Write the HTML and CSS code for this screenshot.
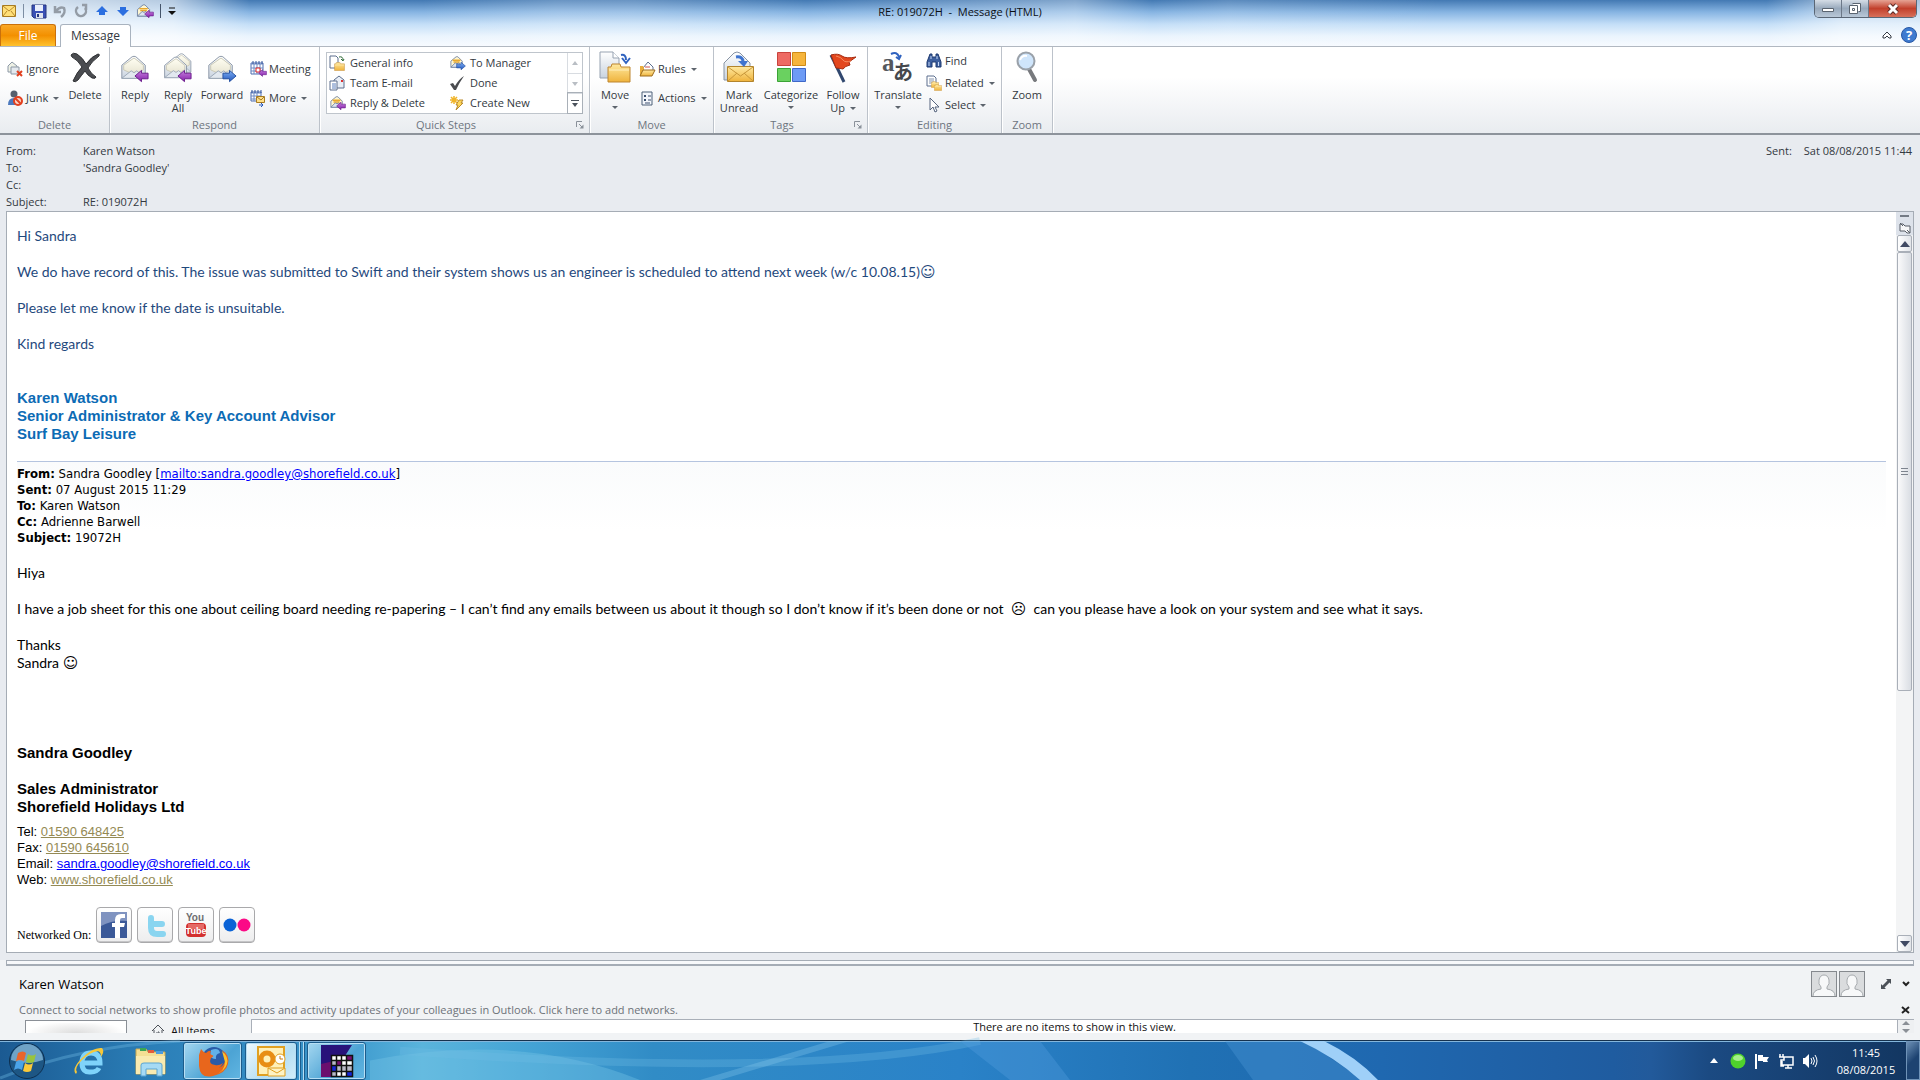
FILE: index.html
```html
<!DOCTYPE html>
<html lang="en">
<head>
<meta charset="utf-8">
<title>RE: 019072H - Message (HTML)</title>
<link rel="stylesheet" href="styles.css">
</head>
<body>
<svg class="defs" aria-hidden="true">
  <defs>
    <linearGradient id="paper" x1="0" y1="0" x2="0" y2="1"><stop offset="0" stop-color="#fffef2"/><stop offset="1" stop-color="#e6e3d0"/></linearGradient>
    <linearGradient id="gold" x1="0" y1="0" x2="0" y2="1"><stop offset="0" stop-color="#ffe9a0"/><stop offset="1" stop-color="#efb33c"/></linearGradient>
    <linearGradient id="ice" x1="0" y1="0" x2="0" y2="1"><stop offset="0" stop-color="#ffffff"/><stop offset="1" stop-color="#c9d3df"/></linearGradient>
    <linearGradient id="blue" x1="0" y1="0" x2="0" y2="1"><stop offset="0" stop-color="#7fb0f5"/><stop offset="1" stop-color="#2458bd"/></linearGradient>
    <linearGradient id="purple" x1="0" y1="0" x2="0" y2="1"><stop offset="0" stop-color="#c77fe0"/><stop offset="1" stop-color="#8420a8"/></linearGradient>
    <symbol id="envelope" viewBox="0 0 32 32">
      <path d="M3 13 14 4q2-1 4 0l10 9v14H3z" fill="url(#ice)" stroke="#8793a3"/>
      <path d="M5 13 15 6q1-1 2 0l9 7v5l-10 5-11-5z" fill="url(#paper)" stroke="#c9c7b4"/>
      <path d="M3 27 13 19l3 2 3-2 9 8z" fill="#e2e8ef" stroke="#9aa6b5"/>
    </symbol>
    <symbol id="left" viewBox="0 0 16 14"><path d="M1 7 8 1v3h7v6H8v3z" fill="url(#purple)" stroke="#6b1d8c"/></symbol>
    <symbol id="right" viewBox="0 0 16 14"><path d="M15 7 8 1v3H1v6h7v3z" fill="url(#blue)" stroke="#2450a0"/></symbol>
    <symbol id="goldmail" viewBox="0 0 16 16">
      <path d="M1 7 7 2h2l5 5v7H1z" fill="#fff6d0" stroke="#7385a3"/>
      <path d="M3 6h9M4 8h7" stroke="#e9a92e" stroke-width="1.5"/>
      <path d="M1 14 6 9l2 1 2-1 4 5z" fill="#dce6f2" stroke="#7385a3"/>
    </symbol>
    <symbol id="folder" viewBox="0 0 24 20"><path d="M1 4h3l1-3h8l1 3h9v15H1z" fill="url(#gold)" stroke="#bd8530"/><path d="M2 7h20" stroke="#fff0bd"/></symbol>
    <symbol id="person" viewBox="0 0 26 26">
      <rect x=".5" y=".5" width="25" height="25" fill="#dadcde" stroke="#85898e"/>
      <path d="M2 25q0-6 8-7v-2q-3-3-2-7 1-5 5-5t5 5q1 4-2 7v2q8 1 8 7" fill="#f7f8f9" stroke="#a6aaae"/>
    </symbol>
    <symbol id="launcher" viewBox="0 0 8 8"><path d="M.5 6V.5H6M3 3l3 3" fill="none" stroke="#8a919a"/><path d="M7.500 3.500v4h-4z" fill="#8a919a"/></symbol>
  </defs>
</svg>
<div class="screen">
  <header class="titlebar">
    <div class="quick">
      <svg width="14" height="12" viewBox="0 0 14 12"><path d="M.5.500h13v11H.5z" fill="#ffdf78" stroke="#a77b22"/><path d="m1 1 6 5 6-5M1 11l4-5M13 11 9 6" fill="none" stroke="#b98a2e"/></svg>
      <i class="sep"></i>
      <button aria-label="Save"><svg width="16" height="16" viewBox="0 0 16 16"><path d="M1 2h14v13H3l-2-2z" fill="#3a50b5" stroke="#28377f"/><path d="M4 2h8v6H4z" fill="#e9eefb"/><path d="M5 10h7v5H5z" fill="#dfe3ee"/><path d="M6 11h2v3H6z" fill="#28377f"/></svg></button>
      <button aria-label="Undo"><svg width="16" height="16" viewBox="0 0 16 16"><path d="M3 3v6h6M4 8q4-5 8-3 2 5-3 9" fill="none" stroke="#949ca6" stroke-width="2.500"/></svg></button>
      <button aria-label="Redo"><svg width="16" height="16" viewBox="0 0 16 16"><path d="M9 2h4v5M12 5a5 5 0 1 1-7-1" fill="none" stroke="#949ca6" stroke-width="2.500"/></svg></button>
      <button aria-label="Previous item"><svg width="16" height="16" viewBox="0 0 16 16"><path d="m8 3 6 6h-3v3H5V9H2z" fill="#2c6fe0"/></svg></button>
      <button aria-label="Next item"><svg width="16" height="16" viewBox="0 0 16 16"><path d="m8 13 6-6h-3V4H5v3H2z" fill="#2c6fe0"/></svg></button>
      <button aria-label="Reply and delete"><svg width="18" height="16" viewBox="0 0 18 16"><use href="#goldmail" width="16" height="15"/><use href="#left" x="8" y="6" width="10" height="10"/></svg></button>
      <i class="sep dark"></i>
      <button class="tiny" aria-label="Customize toolbar"><svg width="8" height="8" viewBox="0 0 8 8"><path d="M1 1h6" stroke="#111"/><path d="M0 4h8L4 8z" fill="#111"/></svg></button>
    </div>
    <h1>RE: 019072H&nbsp; -&nbsp; Message (HTML)</h1>
    <div class="window">
      <button aria-label="Minimize"><svg width="14" height="14" viewBox="0 0 14 14"><path d="M1.500 6.500h11v3h-11z" fill="#fff" stroke="#5a6470"/></svg></button>
      <button aria-label="Restore"><svg width="14" height="14" viewBox="0 0 14 14"><path d="M4.500 1.500h8v8h-2M1.500 3.500h8v8h-8zM4.500 6.500h2v2h-2z" fill="#fff" stroke="#5a6470"/></svg></button>
      <button class="close" aria-label="Close"><svg width="14" height="12" viewBox="0 0 14 12"><path d="M3 2l8 8M11 2l-8 8" stroke="#5c2a26" stroke-width="5"/><path d="M3 2l8 8M11 2l-8 8" stroke="#fff" stroke-width="3"/></svg></button>
    </div>
  </header>
  <nav class="tabs">
    <button class="file">File</button>
    <button class="active">Message</button>
    <div class="help">
      <button aria-label="Collapse ribbon"><svg width="10" height="8" viewBox="0 0 10 8"><path d="M1 5 5 1l4 4v2H7L5 5 3 7H1z" fill="#fff" stroke="#343a44"/></svg></button>
      <button aria-label="Help"><svg width="16" height="16" viewBox="0 0 16 16"><circle cx="8" cy="8" r="7.500" fill="#3f7bd0" stroke="#2858a5"/><text x="8" y="13" text-anchor="middle" class="q">?</text></svg></button>
    </div>
  </nav>

  <section class="ribbon">
    <div class="group g-delete">
      <div class="tools">
        <div class="stack">
          <button><svg width="16" height="16" viewBox="0 0 16 16"><path d="M1 5 5 1l5 4v6H1z" fill="#eef1e6" stroke="#8c98a6"/><path d="M4 6h8v7H4z" fill="#e4e9ef" stroke="#8c98a6"/><path d="m10 10 5 5m0-5-5 5" stroke="#e2401f" stroke-width="2"/></svg>Ignore</button>
          <button><svg width="16" height="16" viewBox="0 0 16 16"><circle cx="7" cy="4" r="3.500" fill="#55606e"/><path d="M1 15q0-7 6-7t5 7z" fill="#4c79bd"/><circle cx="11" cy="11" r="4" fill="#fbd7c9" stroke="#e2401f" stroke-width="2"/><path d="m8 8 6 6" stroke="#e2401f" stroke-width="2"/></svg>Junk <i class="caret"></i></button>
        </div>
        <button class="big"><svg width="32" height="32" viewBox="0 0 32 32"><path d="M2 4q2-3 6-1 6 4 9 10Q23 5 29 3q2 0 1 2-8 6-11 12 3 6 8 9 0 2-4 1-5-3-7-7-4 5-7 9-3 3-5 1 4-9 9-14Q9 9 3 6z" fill="#4a4c50" stroke="#2e3033"/></svg>Delete</button>
      </div>
      <h2>Delete</h2>
    </div>
    <div class="group g-respond">
      <div class="tools">
        <button class="big"><svg width="32" height="32" viewBox="0 0 32 32"><use href="#envelope" x="0" y="2" width="30" height="30"/><use href="#left" x="15" y="18" width="15" height="14"/></svg>Reply</button>
        <button class="big"><svg width="32" height="32" viewBox="0 0 32 32"><use href="#envelope" x="7" y="0" width="25" height="25"/><use href="#envelope" x="0" y="3" width="28" height="28"/><use href="#left" x="15" y="18" width="15" height="14"/></svg>Reply<br>All</button>
        <button class="big wide"><svg width="32" height="32" viewBox="0 0 32 32"><use href="#envelope" x="0" y="2" width="30" height="30"/><use href="#right" x="16" y="18" width="15" height="14"/></svg>Forward</button>
        <div class="stack">
          <button><svg width="16" height="16" viewBox="0 0 16 16"><path d="M1 2h12v11H1z" fill="#fff" stroke="#4c6db0"/><path d="M1 3h12M1 7h12M1 10h12M4 3v10M7 3v10M10 3v10" stroke="#6f8bc4"/><path d="M3 0v3M6 0v3M9 0v3M12 0v3" stroke="#31539a"/><path d="M6 7h4v4H6z" fill="#fff" stroke="#d22"/><use href="#left" x="8" y="8" width="9" height="8"/></svg>Meeting</button>
          <button><svg width="16" height="16" viewBox="0 0 16 16"><path d="M1 2h10v9H1z" fill="#fff" stroke="#4c6db0"/><path d="M1 3h10M1 6h10M1 9h10M4 3v8M7 3v8" stroke="#6f8bc4"/><path d="M2 0v3M5 0v3M8 0v3M11 0v3" stroke="#31539a"/><path d="M6.500 6.500h8v6h-8z" fill="#ffe08a" stroke="#a77b22"/><path d="m7 7 4 3 3-3" fill="none" stroke="#a77b22"/><path d="M9 15h4m-2-2 2 2-2 2" stroke="#2458bd" fill="none"/></svg>More <i class="caret"></i></button>
        </div>
      </div>
      <h2>Respond</h2>
    </div>
    <div class="group g-steps">
      <div class="gallery">
        <div class="steps">
          <button><svg width="16" height="16" viewBox="0 0 16 16"><path d="M1 1h6l2 2v10H1z" fill="#fff" stroke="#5c6f8e"/><path d="M10 2q4-1 4 3m-2-1 2 2 1-2" fill="none" stroke="#2d6a35"/><use href="#folder" x="5" y="7" width="11" height="9"/></svg>General info</button>
          <button><svg width="16" height="16" viewBox="0 0 16 16"><use href="#goldmail" width="16" height="14"/><use href="#right" x="7" y="6" width="10" height="10"/></svg>To Manager</button>
          <button><svg width="16" height="16" viewBox="0 0 16 16"><path d="M5 5 10 1l5 4v8H5z" fill="#e9eef6" stroke="#5c6f8e"/><path d="M1 6h7v9H1z" fill="#fff" stroke="#5c6f8e"/><path d="M3 9h4M3 11h4M3 13h4" stroke="#5b7fbd"/><path d="M12 5h2v2h-2z" fill="#d33"/></svg>Team E-mail</button>
          <button><svg width="16" height="16" viewBox="0 0 16 16"><path d="m1 9 3-1 2 3q4-7 9-10Q10 8 7 15H5z" fill="#4a4c50"/></svg>Done</button>
          <button><svg width="16" height="16" viewBox="0 0 16 16"><use href="#goldmail" width="16" height="14"/><use href="#left" x="7" y="6" width="10" height="10"/></svg>Reply &amp; Delete</button>
          <button><svg width="16" height="16" viewBox="0 0 16 16"><path d="M5 1v8M1 5h8M2 2l6 6M8 2 2 8" stroke="#f0b429" stroke-width="1.500"/><path d="M10 5h4l-2 3h2l-7 7 2-5H7z" fill="#ffd75a" stroke="#b98a2e"/></svg>Create New</button>
        </div>
        <div class="pager">
          <button disabled aria-label="Row up"><svg width="6" height="4"><path d="M0 4h6L3 0z" fill="#b9bec4"/></svg></button>
          <button disabled aria-label="Row down"><svg width="6" height="4"><path d="M0 0h6L3 4z" fill="#b9bec4"/></svg></button>
          <button class="on" aria-label="More steps"><svg width="8" height="7"><path d="M0 0h8v1H0zM1 3h6L4 7z" fill="#4b525c"/></svg></button>
        </div>
      </div>
      <h2>Quick Steps</h2>
      <button class="launch" aria-label="Manage quick steps"><svg width="8" height="8"><use href="#launcher"/></svg></button>
    </div>
    <div class="group g-move">
      <div class="tools">
        <button class="big"><svg width="32" height="32" viewBox="0 0 32 32"><path d="M1 1h13l6 6v20H1z" fill="url(#ice)" stroke="#97a2b1"/><path d="M14 1v6h6" fill="#fff" stroke="#97a2b1"/><path d="M22 4q5-1 5 5m-4-2 4 5 4-5" fill="none" stroke="#2f62bf" stroke-width="2"/><use href="#folder" x="8" y="12" width="24" height="20"/></svg>Move<i class="caret"></i></button>
        <div class="stack">
          <button><svg width="16" height="16" viewBox="0 0 16 16"><path d="m4 7 5-6 5 5v4H4z" fill="#fff" stroke="#5c6f8e"/><path d="M6 6h5" stroke="#c55"/><path d="M1 5h3l1 2v8H1z" fill="#e9ad3b"/><path d="M4 9h12l-3 6H1z" fill="url(#gold)" stroke="#9d6c1e"/></svg>Rules <i class="caret"></i></button>
          <button><svg width="16" height="16" viewBox="0 0 16 16"><path d="M3 2h10v13H3z" fill="#f3f6fb" stroke="#4d6079"/><path d="M5 5h2v2H5zM5 9h2v2H5z" fill="#3b4f6e"/><path d="M9 6h3M9 10h3M6 13h5" stroke="#3b4f6e"/></svg>Actions <i class="caret"></i></button>
        </div>
      </div>
      <h2>Move</h2>
    </div>
    <div class="group g-tags">
      <div class="tools">
        <button class="big"><svg width="32" height="32" viewBox="0 0 32 32"><path d="M1 12 11 2q3-2 6 0l10 10v17H1z" fill="url(#ice)" stroke="#8793a3"/><path d="M4.500 15.500h26v15h-26z" fill="url(#gold)" stroke="#b3842c"/><path d="m5 16 12.500 9L30 16M5 30l9-8M30 30l-9-8" fill="none" stroke="#c8973a"/><path d="M13 6q7-1 7 5" fill="none" stroke="#3f74cf" stroke-width="3"/><path d="M15 10h10l-4 6z" fill="#3f74cf"/></svg>Mark<br>Unread</button>
        <button class="big cat"><svg width="32" height="32" viewBox="0 0 32 32"><path d="M2.500 1.500h13v13h-13z" fill="#ee6a63" stroke="#c9433d"/><path d="M17.500 1.500h13v13h-13z" fill="#f6b53c" stroke="#cf8b16"/><path d="M2.500 17.500h13v13h-13z" fill="#6ad160" stroke="#3ba336"/><path d="M17.500 17.500h13v13h-13z" fill="#6d9bf5" stroke="#3f68c8"/></svg>Categorize<i class="caret"></i></button>
        <button class="big"><svg width="32" height="32" viewBox="0 0 32 32"><path d="M4 4 17 31" stroke="#31486f" stroke-width="3"/><path d="M4 4q7-2 11 1t14 1l-7 5 1 3q-5 1-7 4-5-1-7-1z" fill="#e3471e" stroke="#a82c10"/><path d="M9 5q5 1 7 4t8 1" stroke="#f58b5f" fill="none"/></svg>Follow<span>Up <i class="caret"></i></span></button>
      </div>
      <h2>Tags</h2>
      <button class="launch" aria-label="Tag options"><svg width="8" height="8"><use href="#launcher"/></svg></button>
    </div>
    <div class="group g-editing">
      <div class="tools">
        <button class="big wide"><svg width="32" height="32" viewBox="0 0 32 32"><text x="0" y="20" class="latin">a</text><text x="11" y="29" class="kana">あ</text><path d="M9 3q6-3 8 3m-3 0 3 2 2-4" fill="none" stroke="#2f62bf" stroke-width="2"/></svg>Translate<i class="caret"></i></button>
        <div class="stack three">
          <button><svg width="16" height="16" viewBox="0 0 16 16"><path d="M4 1h2v3h4V1h2l3 8v5h-5V9H6v5H1V9z" fill="#3d5f9e" stroke="#1f3a70"/><path d="M3 9v4M12.500 9v4M5 3v3M11 3v3" stroke="#c4d6f5"/></svg>Find</button>
          <button><svg width="16" height="16" viewBox="0 0 16 16"><path d="M1 1h7l2 2v8H1z" fill="#fff" stroke="#5c6f8e"/><path d="M3 4h5M3 6h5M3 8h5" stroke="#8493ac"/><use href="#folder" x="5" y="6" width="8" height="7"/><use href="#folder" x="8" y="9" width="8" height="7"/></svg>Related <i class="caret"></i></button>
          <button><svg width="16" height="16" viewBox="0 0 16 16"><path d="M4 1v12l3-3 2 5 2-1-2-4h4z" fill="#fff" stroke="#56657e"/></svg>Select <i class="caret"></i></button>
        </div>
      </div>
      <h2>Editing</h2>
    </div>
    <div class="group g-zoom">
      <div class="tools">
        <button class="big"><svg width="32" height="32" viewBox="0 0 32 32"><path d="m18 18 6 11" stroke="#77797d" stroke-width="4" stroke-linecap="round"/><circle cx="15" cy="10" r="8.500" fill="#cfe5fb" stroke="#9aa1a9" stroke-width="2"/><path d="M9 9q2-5 7-4" stroke="#fff" stroke-width="2" fill="none"/></svg>Zoom</button>
      </div>
      <h2>Zoom</h2>
    </div>
  </section>

  <section class="envelope">
    <dl>
      <dt>From:</dt><dd>Karen Watson</dd>
      <dt>To:</dt><dd>'Sandra Goodley'</dd>
      <dt>Cc:</dt><dd></dd>
      <dt>Subject:</dt><dd>RE: 019072H</dd>
    </dl>
    <p><span>Sent:</span><span>Sat 08/08/2015 11:44</span></p>
  </section>

  <main class="surround">
  <div class="frame">
    <article class="mail">
      <div class="reply">
        <p>Hi Sandra</p>
        <p>We do have record of this. The issue was submitted to Swift and their system shows us an engineer is scheduled to attend next week (w/c 10.08.15)<span class="face">☺</span></p>
        <p>Please let me know if the date is unsuitable.</p>
        <p>Kind regards</p>
      </div>
      <p class="sign karen">Karen Watson<br>Senior Administrator &amp; Key Account Advisor<br>Surf Bay Leisure</p>
      <div class="quoted">
        <p><b>From:</b> Sandra Goodley [<a href="mailto:sandra.goodley@shorefield.co.uk">mailto:sandra.goodley@shorefield.co.uk</a>]</p>
        <p><b>Sent:</b> 07 August 2015 11:29</p>
        <p><b>To:</b> Karen Watson</p>
        <p><b>Cc:</b> Adrienne Barwell</p>
        <p><b>Subject:</b> 19072H</p>
      </div>
      <div class="original">
        <p>Hiya</p>
        <p>I have a job sheet for this one about ceiling board needing re-papering – I can’t find any emails between us about it though so I don’t know if it’s been done or not &nbsp;<span class="face">☹</span>&nbsp; can you please have a look on your system and see what it says.</p>
        <p>Thanks<br>Sandra <span class="face">☺</span></p>
      </div>
      <p class="sign">Sandra Goodley</p>
      <p class="sign">Sales Administrator<br>Shorefield Holidays Ltd</p>
      <div class="contact">
        <p>Tel: <a class="tan" href="tel:01590648425">01590 648425</a></p>
        <p>Fax: <a class="tan" href="tel:01590645610">01590 645610</a></p>
        <p>Email: <a href="mailto:sandra.goodley@shorefield.co.uk">sandra.goodley@shorefield.co.uk</a></p>
        <p>Web: <a class="tan" href="#web">www.shorefield.co.uk</a></p>
      </div>
      <div class="social">
        <span>Networked On:</span>
        <a href="#facebook" aria-label="Facebook"><svg width="28" height="28" viewBox="0 0 28 28"><path d="M1 1h26v26H1z" fill="#3b5998"/><path d="M1 1h26v9Q12 9 1 15z" fill="#7f93c0"/><path d="M15 27V16h-3v-4h3V9q0-6 6-6h4v4h-3q-2 0-2 2v3h5l-1 4h-4v11z" fill="#fff"/></svg></a>
        <a href="#twitter" aria-label="Twitter"><svg width="28" height="28" viewBox="0 0 28 28"><path d="M10 7v10q0 6 6 6h6M10 13h11" fill="none" stroke="#8ad5f0" stroke-width="6" stroke-linecap="round" stroke-linejoin="round"/></svg></a>
        <a href="#youtube" aria-label="YouTube"><svg width="28" height="28" viewBox="0 0 28 28"><text x="13" y="10" class="you">You</text><rect x="4" y="12" width="20" height="14" rx="4" fill="#d3302f"/><path d="M6 13h16v5H6z" fill="#e46a66"/><text x="14" y="23" class="tube">Tube</text></svg></a>
        <a href="#flickr" aria-label="Flickr"><svg width="28" height="28" viewBox="0 0 28 28"><circle cx="7" cy="14" r="6.500" fill="#0b63d6"/><circle cx="21" cy="14" r="6.500" fill="#fb0a86"/></svg></a>
      </div>
    </article>
    <div class="scroll">
      <div class="scrollhead"><i></i><svg width="12" height="12" viewBox="0 0 12 12"><path d="M1 2h3l2 2h5v7H8L6 9H1zM8 8l3 3M1 1l3 3" fill="#f7f7f8" stroke="#565d66"/></svg></div>
      <button aria-label="Scroll up"><svg width="10" height="6"><path d="M0 6h10L5 0z" fill="#404a63"/></svg></button>
      <div class="thumb"><i></i><i></i><i></i></div>
      <div class="track"></div>
      <button aria-label="Scroll down"><svg width="10" height="6"><path d="M0 0h10L5 6z" fill="#404a63"/></svg></button>
    </div>
  </div>
  </main>

  <section class="people">
    <div class="splitter"></div>
    <div class="who">
      <span>Karen Watson</span>
      <svg width="26" height="26"><use href="#person"/></svg>
      <svg width="26" height="26"><use href="#person"/></svg>
      <button class="grow" aria-label="Expand"><svg width="12" height="12" viewBox="0 0 12 12"><path d="M6 1h5v5L9.500 4.500l-5 5L6 11H1V6l1.500 1.500 5-5z" fill="#4c5158"/></svg></button>
      <button aria-label="Collapse pane"><svg width="8" height="6" viewBox="0 0 8 6"><path d="m1 1 3 3 3-3" fill="none" stroke="#222" stroke-width="2"/></svg></button>
    </div>
    <div class="connect">
      <a href="#networks">Connect to social networks to show profile photos and activity updates of your colleagues in Outlook. Click here to add networks.</a>
      <button aria-label="Dismiss"><svg width="9" height="8" viewBox="0 0 9 8"><path d="m1 1 7 6M8 1 1 7" stroke="#222" stroke-width="2"/></svg></button>
    </div>
    <div class="items">
      <div class="photo"></div>
      <div class="all"><svg width="14" height="12" viewBox="0 0 14 12"><path d="m1 8 6-6 6 6M3 7v6h8V7M7 9h1v3H6V9" fill="none" stroke="#4c5158"/></svg>All Items</div>
      <div class="list">There are no items to show in this view.</div>
      <div class="mini"><svg width="8" height="12" viewBox="0 0 8 12"><path d="M0 4h8L4 0zM0 8h8l-4 4z" fill="#8a8f96"/></svg></div>
    </div>
  </section>

  <footer class="taskbar">
    <svg class="streaks" viewBox="0 0 1920 40" preserveAspectRatio="none" aria-hidden="true">
      <path d="M0 38Q80 5 180 0" stroke="#69b4df" stroke-width="3" opacity=".4" fill="none"/>
      <path d="M370 20Q520-10 640 40H370z" fill="#7cc8e8" opacity=".35"/>
      <path d="M400 10Q800 40 980 0" stroke="#6fbce6" stroke-width="8" opacity=".3" fill="none"/>
      <path d="M700 40 830 0h20L720 40z" fill="#8fcdf0" opacity=".3"/>
      <path d="M960 0h80l30 40h-60z" fill="#4f9cdb" opacity=".4"/>
      <path d="M1225 0h80l58 40h-110z" fill="#4f9cdb" opacity=".35"/>
      <path d="M1300 0q34 16 60 40h18q-22-24-54-40z" fill="#9fd0f8"/>
    </svg>
    <button class="start" aria-label="Start"><svg width="38" height="38" viewBox="0 0 38 38"><circle cx="19" cy="19" r="17.500" fill="#1d5684" stroke="#0d2f50"/><path d="M3 18a16 16 0 0 1 32 0q-16 6-32 0" fill="#6fa3c6"/><path d="M10 11q5-3 8 0l-2 8q-4-2-8 0z" fill="#e8652c"/><path d="M20 12q4 3 8 0l-2 8q-4 2-8 0z" fill="#9ac43c"/><path d="M8 20q4-2 8 0l-2 8q-4-3-8 0z" fill="#4aa3e8"/><path d="M17 21q4 3 8 0l-2 8q-4 2-8 0z" fill="#fbc93a"/></svg></button>
    <button class="launcher" aria-label="Internet Explorer"><svg width="32" height="32" viewBox="0 0 32 32"><path d="M8 18h19q0-10-9-10T9 18t9 9q6 0 8-4" fill="none" stroke="#7fd3fa" stroke-width="5"/><path d="M3 29q-5-5 6-16T29 3q3 3-1 9 0-5-3-6Q17 7 9 15T4 27z" fill="#f6c739"/></svg></button>
    <button class="launcher" aria-label="Explorer"><svg width="34" height="32" viewBox="0 0 34 32"><path d="M2 4h10l2 3h17v22H2z" fill="#f4df94" stroke="#c8a84e"/><path d="M6 3h6v3H6z" fill="#3aa655"/><path d="M14 5h6v3h-6z" fill="#e35b3c"/><path d="M22 6h7v3h-7z" fill="#4b9be0"/><path d="M2 11h29v18H2z" fill="#f9eab0"/><path d="M7 20q0-2 3-2h15q3 0 3 2v11h-5v-7H12v7H7z" fill="#a6daf5" stroke="#5ba5d3"/></svg></button>
    <button class="task" aria-label="Firefox"><svg width="32" height="32" viewBox="0 0 32 32"><circle cx="17" cy="14" r="12" fill="#2a5ba8"/><path d="M14 5q8-3 9 3-5 1-4 6-5 0-6-4z" fill="#62b0e8"/><path d="M2 10q0 0 2-6 2 3 5 4 3-3 5-2-2 3 1 4 3 1-1 3-3 6 4 7 4 1 8-2-3 7-9 5 9 1 11-7 1-6-3-11 8 5 6 14T16 31 2 21z" fill="#e8661c"/><path d="M25 6q7 6 5 13T18 30q10-4 10-13z" fill="#fbc02d"/></svg></button>
    <button class="task outlook" aria-label="Outlook"><svg width="32" height="32" viewBox="0 0 32 32"><path d="M3 2h26v28H3z" fill="#fff0b8" stroke="#e0a021" stroke-width="2"/><circle cx="12" cy="14" r="6" fill="none" stroke="#e88d14" stroke-width="5"/><circle cx="25" cy="14" r="5" fill="#fff" stroke="#e0a021"/><path d="M25 11v3h3" stroke="#c77a10" fill="none"/><path d="M13 23h17v8H13z" fill="#fff3c4" stroke="#e0a021"/><path d="m13 23 9 5 8-5" fill="none" stroke="#e0a021"/></svg></button>
    <i class="pile"></i><i class="pile"></i>
    <button class="task last" aria-label="Shorefield system"><svg width="34" height="34" viewBox="0 0 34 34"><path d="M1 1h31l-9 14-9 18H1z" fill="#28127a"/><path d="M1 33V20l13-3v16z" fill="#6b0f6e"/><path d="M11 12h21v21H11z" fill="#fff"/><path d="M11 17h11v5h10v5H17v6h-6z" fill="#b9b9c6"/><path d="M17 17h5v5h-5zM27 12h5v5h-5z" fill="#7a0f73"/><path d="M11 22h5v5h-5zM27 28h5v5h-5z" fill="#1626d8"/><path d="M11.500 11.500h21v21h-21zM16.500 12v21M21.500 12v21M26.500 12v21M11 16.500h21M11 21.500h21M11 27.500h21" fill="none" stroke="#111" stroke-width="1.500"/></svg></button>
    <div class="tray">
      <button class="more" aria-label="Show hidden icons"><svg width="8" height="5"><path d="M0 5h8L4 0z" fill="#fff"/></svg></button>
      <svg width="16" height="16"><circle cx="8" cy="8" r="7.500" fill="#4fd22c"/><ellipse cx="8" cy="5" rx="5" ry="3" fill="#a5f08a"/></svg>
      <svg width="16" height="16" viewBox="0 0 16 16"><path d="M2 1v15" stroke="#fff" stroke-width="2"/><path d="M4 2h5v2h6l-2 3 1 2H9V8H4z" fill="#fff"/></svg>
      <svg width="16" height="16" viewBox="0 0 16 16"><path d="M5 4h10v8H4V8M7 15h7M10 12v3M2 1v3M5 1v3M1 4h5v3H3v6h3" fill="none" stroke="#fff" stroke-width="1.500"/></svg>
      <svg width="16" height="16" viewBox="0 0 16 16"><path d="M1 5h2l4-4v14l-4-4H1z" fill="#fff"/><path d="M9 5q2 3 0 6M11 4q3 4 0 8M13 2q4 6 0 12" fill="none" stroke="#fff"/></svg>
      <time>11:45<br>08/08/2015</time>
      <button class="desktop" aria-label="Show desktop"></button>
    </div>
  </footer>
</div>
</body>
</html>
```
FILE: styles.css
```css
* { box-sizing: border-box; }
body, h1, h2, p, dl, dd { margin: 0; }
body { font: 11px/16px "Open Sans", "Noto Sans", sans-serif; color: #333941; }
button { font: inherit; color: inherit; background: none; border: 0; padding: 0; display: flex; align-items: center; justify-content: center; }
svg { flex: none; display: block; overflow: visible; }
.defs { position: absolute; width: 0; height: 0; }

.screen {
  min-height: 100vh; display: flex; flex-direction: column;
  background:
    linear-gradient(90deg, #fffc 0, #fff9 9%, #fff0 13%, #fff0 22%, #fff3 29%, #fff3 33%, #fff0 42%, #fff5 56%, #fff0 60%, #fff2 64%, #fff0 75%, #fff0 92%, #fff8 96%),
    linear-gradient(#4379b3 0, #86b4e2 12px, #c3def7 24px, #eaf4fd 36px, #f8fbff 47px) no-repeat;
}

/* title bar */
.titlebar { height: 22px; display: grid; grid-template-columns: 1fr auto 1fr; align-items: center; }
.quick { display: flex; align-items: center; gap: 6px; padding-left: 2px; }
.quick button { margin-right: -1px; }
.sep { width: 1px; height: 14px; background: #7d8ea3; margin: 0 1px; }
.sep.dark { background: #44546a; }
h1 { font: 11px/16px "Open Sans", sans-serif; color: #0b0f14; padding-top: 2px; }
.window { justify-self: end; align-self: start; display: flex; height: 18px; margin-right: 3px; border: 1px solid #5a6675; border-top: 0; border-radius: 0 0 5px 5px; overflow: hidden; }
.window button { width: 27px; background: linear-gradient(#d5dde6, #98a9bc 50%, #b9c8d8); border-right: 1px solid #6c7888; }
.window .close { width: 47px; border: 0; background: linear-gradient(#e6a394, #c2402c 50%, #d8705a); }

/* tabs */
.tabs { height: 25px; display: flex; align-items: flex-end; padding-top: 2px; border-bottom: 1px solid #b1b8c1; font-size: 12px; }
.tabs .file { width: 56px; height: 22px; color: #fff; background: linear-gradient(#f9a828, #f39000 50%, #ffc22e); border: 1px solid #c9700c; border-bottom: 0; border-radius: 3px 3px 0 0; }
.tabs .active { width: 71px; height: 23px; margin: 0 0 -1px 4px; background: #fff; border: 1px solid #a9b3bf; border-bottom: 0; border-radius: 3px 3px 0 0; }
.help { margin-left: auto; display: flex; align-items: center; gap: 9px; height: 22px; padding-right: 3px; }
.q { font: bold 13px "Open Sans", sans-serif; fill: #fff; }

/* ribbon */
.ribbon { display: flex; height: 88px; background: linear-gradient(#fff 0, #fff 35%, #e9ecf0 100%); border-bottom: 2px solid #8d939b; }
.group { position: relative; display: flex; flex-direction: column; justify-content: space-between; border-right: 1px solid #bcc2ca; box-shadow: 1px 0 #fff; }
.group h2 { font: 11px/16px "Open Sans", sans-serif; color: #6d7580; text-align: center; }
.g-steps h2, .g-tags h2 { padding-right: 17px; }
.tools { display: flex; height: 68px; }
.g-delete { width: 110px; }
.g-respond { width: 210px; }
.g-steps { width: 270px; }
.g-move { width: 124px; }
.g-tags { width: 154px; }
.g-editing { width: 134px; }
.g-zoom { width: 51px; }
.big { flex-direction: column; justify-content: flex-start; width: 42px; padding-top: 4px; line-height: 13px; }
.big svg { margin-bottom: 5px; }
.big.wide { width: 50px; }
.big.cat { width: 62px; }
.stack { display: flex; flex-direction: column; gap: 13px; padding: 14px 0 0 7px; }
.stack.three { gap: 6px; padding-top: 6px; }
.stack button { gap: 3px; justify-content: flex-start; height: 16px; }
.caret { display: inline-block; border: 3px solid transparent; border-top-color: #5d646d; border-bottom: 0; margin-left: 2px; vertical-align: 2px; }
.big > .caret { margin: 5px 0 0; }
.g-delete .stack { width: 64px; }
.g-respond .tools { padding-left: 4px; gap: 1px; }
.g-respond .wide { margin-left: -1px; width: 46px; }
.g-respond .stack { padding-left: 4px; }
.g-move .tools, .g-tags .tools, .g-zoom .tools { padding-left: 4px; }
.g-move .stack, .g-editing .stack { padding-left: 3px; }
.g-editing .tools { padding-left: 5px; }
.latin { font: bold 25px "Liberation Serif", serif; fill: #55585d; }
.kana { font: bold 20px "Noto Sans CJK JP", sans-serif; fill: #45484d; }
.gallery { display: flex; height: 62px; margin: 5px 6px 0 6px; background: #fff; border: 1px solid #bfc5cc; }
.steps { flex: 1; display: grid; grid-template-columns: 120px 1fr; grid-template-rows: repeat(3, 1fr); padding-left: 2px; }
.steps button { gap: 5px; justify-content: flex-start; }
.pager { width: 15px; display: grid; grid-template-rows: repeat(3, 1fr); border-left: 1px solid #d8dce1; }
.pager button + button { border-top: 1px solid #d8dce1; }
.pager .on { outline: 1px solid #a9b0b8; }
.launch { position: absolute; right: 5px; bottom: 4px; }

/* message header */
.envelope { display: flex; justify-content: space-between; padding: 7px 8px 1px 6px; background: #e8ebf0; line-height: 17px; }
.envelope dl { display: grid; grid-template-columns: 77px auto; grid-auto-rows: 17px; }
.envelope p { display: flex; gap: 12px; }

/* message body */
.surround { flex: 1; display: flex; padding: 0 6px 7px; background: #e8ebf0; }
.frame { flex: 1; display: flex; background: #fff; border: 1px solid #a5acb5; }
.mail { flex: 1; min-width: 0; padding: 15px 10px 8px; color: #000; font: 14px/18px Lato, sans-serif; }
.reply { color: #1f497d; }
.reply p, .original p { margin-bottom: 18px; }
.face { font: 15px/16px "DejaVu Sans", sans-serif; }
.sign { font: bold 15px/18px "Liberation Sans", sans-serif; margin-bottom: 18px; }
.karen { color: #0c6bb5; margin-top: 36px; }
.quoted { border-top: 1px solid #b5c4df; background: linear-gradient(#fafbfc, #fff 70px); padding-top: 4px; margin-bottom: 18px; font: 13px/16px "DejaVu Sans Condensed", "DejaVu Sans", sans-serif; }
.mail a { color: #00f; }
.mail a.tan { color: #948a54; }
.original { margin-bottom: 72px; }
.original p:last-child { margin-bottom: 0; }
.contact { margin-top: -10px; font: 13px/16px "Liberation Sans", sans-serif; }
.social { display: flex; align-items: flex-end; gap: 5px; margin-top: 19px; font: 12px/16px "Liberation Serif", serif; }
.social a { display: grid; place-items: center; width: 36px; height: 36px; border: 1px solid #a9a9ab; border-radius: 4px; background: linear-gradient(#fff, #ededee); box-shadow: inset 0 -1px #c5c5c7; }
.you { font: bold 10px "Liberation Sans", sans-serif; fill: #6d6d6f; text-anchor: middle; }
.tube { font: bold 9px "Liberation Sans", sans-serif; fill: #fff; text-anchor: middle; }

.scroll { width: 17px; display: flex; flex-direction: column; background: #f3f4f5; }
.scrollhead { height: 23px; background: #dde2ea; display: flex; flex-direction: column; align-items: center; gap: 5px; padding-top: 3px; }
.scrollhead i { width: 9px; height: 2px; background: #747b85; }
.scroll button { height: 17px; margin: 0 1px; border: 1px solid #a9afb8; border-radius: 2px; background: linear-gradient(90deg, #fff, #e1e4e9); }
.thumb { flex: 438; margin: 0 1px; border: 1px solid #a9afb8; border-radius: 2px; background: linear-gradient(90deg, #fafafb, #d9dde3); display: flex; flex-direction: column; justify-content: center; align-items: center; gap: 2px; }
.thumb i { width: 7px; height: 1px; background: #7d848e; }
.track { flex: 245; }

/* people pane */
.people { height: 80px; background: #f1f3f5; }
.splitter { height: 6px; margin: 0 6px; border: 1px solid #a5acb5; border-width: 1px 1px 2px; background: #f7f8fa; }
.who { display: flex; align-items: center; gap: 2px; height: 35px; padding: 0 10px 0 19px; font-size: 13px; color: #000; }
.who span { margin-right: auto; }
.who .grow { margin: 0 8px 0 13px; }
.connect { display: flex; align-items: center; justify-content: space-between; height: 18px; padding: 0 10px 0 19px; }
.connect a { color: #6d7278; text-decoration: none; }
.items { display: flex; height: 14px; overflow: hidden; color: #111; margin-right: 6px; }
.photo { width: 102px; height: 26px; margin: 1px 0 0 25px; border: 1px solid #8a8f96; background: radial-gradient(#ddd, #fff 70%); box-shadow: inset 0 0 0 2px #fff; }
.all { display: flex; gap: 6px; width: 124px; padding: 4px 0 0 24px; line-height: 16px; }
.list { flex: 1; height: 30px; text-align: center; line-height: 14px; background: #fff; border: 1px solid #a9afb8; }
.mini { width: 16px; display: grid; place-items: center; border-top: 1px solid #a9afb8; background: #eef0f2; }

/* taskbar */
.taskbar { position: relative; z-index: 1; height: 40px; display: flex; align-items: center; padding-left: 8px; border-top: 1px solid #16324e; box-shadow: inset 0 1px #83b6dc; background: linear-gradient(90deg, #1b5a92 0, #2b7fb8 8%, #3c98cd 18%, #5ab4dc 22%, #46a5d6 27%, #318cc6 34%, #2a82c8 50%, #2071b4 62%, #1f68b0 72%, #1f5ca0 84%, #225a9b 86%, #1b4a82 89%, #12355f 100%); }
.streaks { position: absolute; inset: 0; width: 100%; height: 100%; z-index: -1; }
.start { width: 38px; }
.launcher { width: 62px; margin-left: 12px; }
.launcher + .launcher { margin-left: 0; }
.task { width: 59px; height: 38px; margin-left: 1px; border: 1px solid #1c5c8c; border-radius: 3px; box-shadow: inset 0 0 0 1px #b6def4; background: linear-gradient(135deg, #a5d7f0, #4ca3d4 60%, #61b6e2); }
.task.outlook { width: 52px; margin-left: 3px; background: linear-gradient(135deg, #f0f9fd, #b5def2 60%, #d5eefa); }
.task.last { margin-left: 2px; }
.pile { width: 4px; height: 38px; border-right: 1px solid #1c5c8c; box-shadow: inset -1px 0 #b6def4; }
.tray { margin-left: auto; height: 100%; display: flex; align-items: center; gap: 8px; color: #fff; }
.tray .more { margin-right: 4px; }
.tray time { width: 80px; text-align: center; line-height: 17px; }
.desktop { width: 14px; height: 100%; border: 1px solid #6f93b8; background: linear-gradient(135deg, #6d90b5, #1d4371 50%); margin-left: -8px; }
```
